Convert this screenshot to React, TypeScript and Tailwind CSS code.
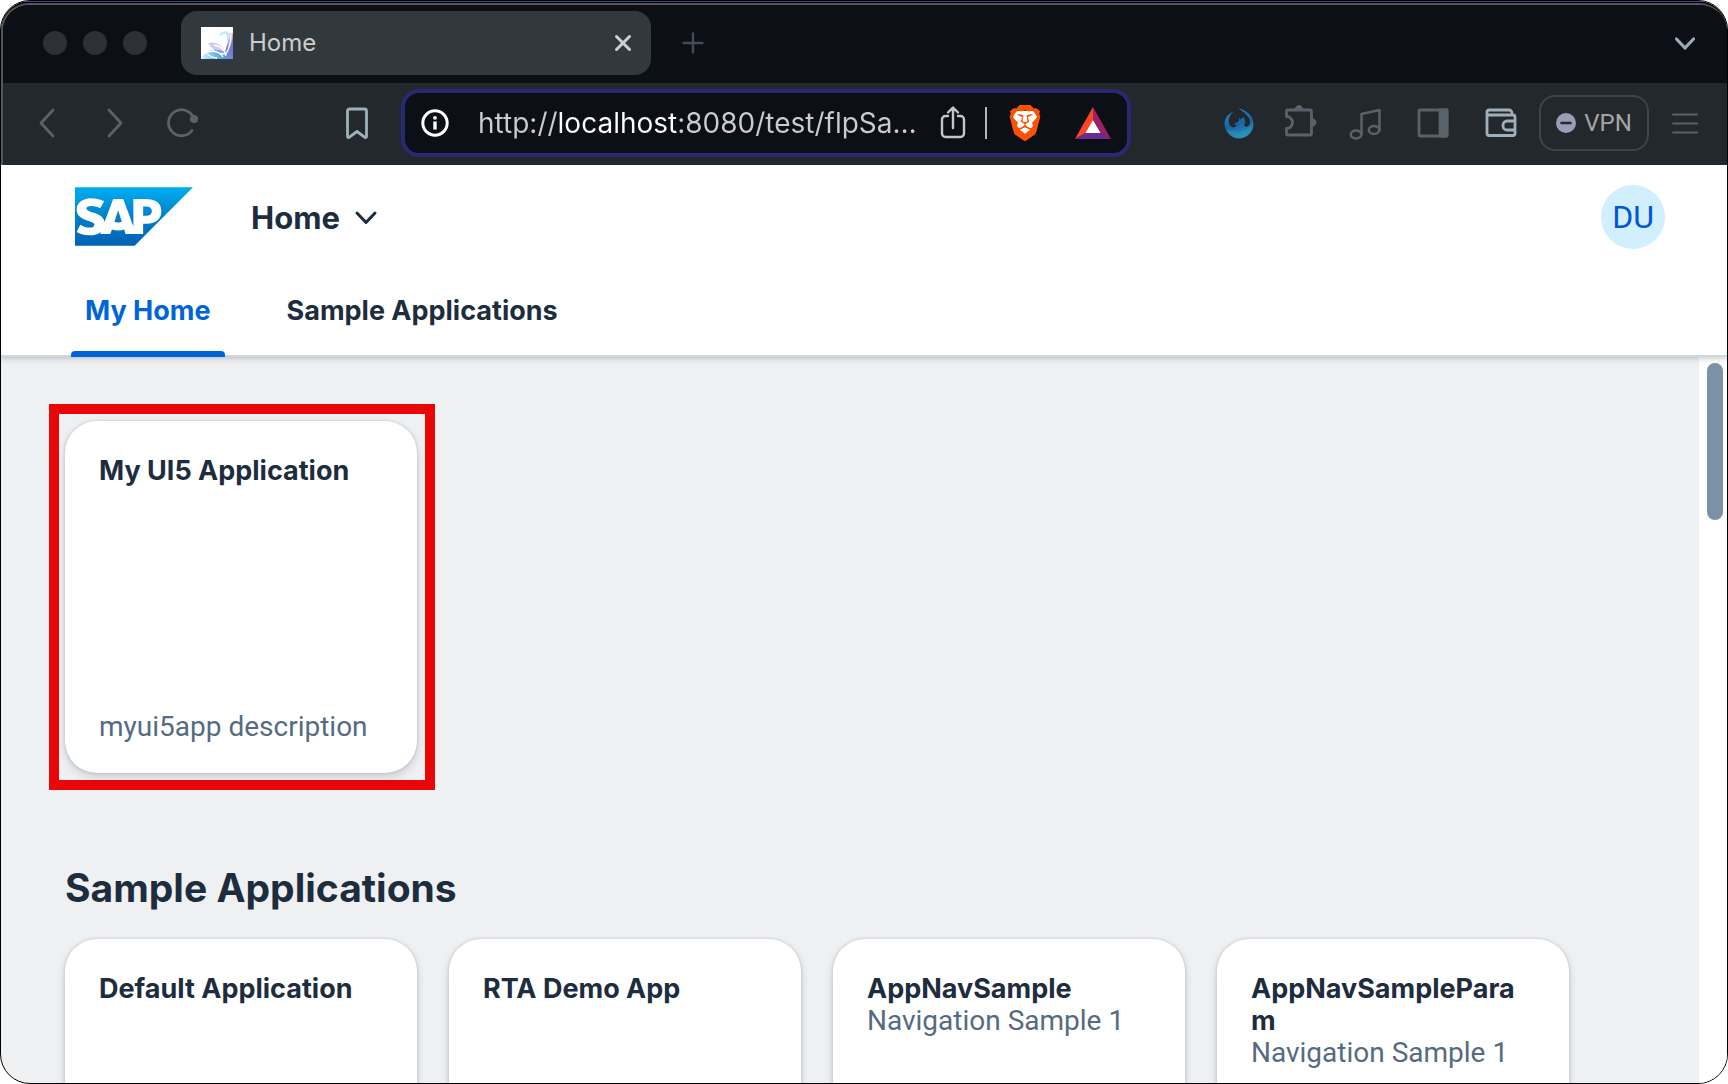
import type { ReactNode } from "react";
import { SiBrave, SiSap } from "react-icons/si";

type Tile = { title: string; subtitle?: string; footer?: string };

const sampleTiles: Tile[] = [
  { title: "Default Application" },
  { title: "RTA Demo App" },
  { title: "AppNavSample", subtitle: "Navigation Sample 1" },
  { title: "AppNavSampleParam", subtitle: "Navigation Sample 1" },
];

function ToolButton({ label, className = "", children }: { label: string; className?: string; children: ReactNode }) {
  return (
    <button type="button" aria-label={label} className={`size-10 shrink-0 ${className}`}>
      <svg viewBox="0 0 40 40" className="size-10" fill="none" stroke="currentColor" strokeWidth="2.8" strokeLinecap="round" strokeLinejoin="round">
        {children}
      </svg>
    </button>
  );
}

function Favicon() {
  return (
    <svg viewBox="0 0 32 32" className="size-8 shrink-0" aria-hidden="true">
      <defs>
        <linearGradient id="favBlue" x1="0" y1="1" x2="1" y2="0.6">
          <stop offset="0" stopColor="#d8f3fb" />
          <stop offset="0.5" stopColor="#4aa9e4" />
          <stop offset="1" stopColor="#6a63c9" />
        </linearGradient>
        <linearGradient id="favPink" x1="0" y1="1" x2="1" y2="0">
          <stop offset="0" stopColor="#8f9fe6" />
          <stop offset="1" stopColor="#f4d5ec" />
        </linearGradient>
      </defs>
      <rect width="32" height="32" fill="#fff" />
      <path d="M0 32C5 22 16 21 24 25C26 18 28 10 32 6V32Z" fill="url(#favBlue)" opacity="0.9" />
      <path d="M7 16C15 14 22 18 25 26C18 27 12 24 7 16Z" fill="#a9a3df" opacity="0.55" />
      <path d="M22 5C28 4 26 14 27 24C30 18 32 13 32 5L28 6Z" fill="url(#favPink)" opacity="0.7" />
      <path d="M19 8C24 3 28 5 27 12" fill="none" stroke="#bfe6f5" strokeWidth="2" />
      <path d="M6 17C10 24 17 27 25 27M2 28C8 23 18 23 22 30M13 18C20 19 24 23 25 29M30 8C30 16 28 22 25 27M6 27C10 30 13 31 16 31" fill="none" stroke="#fff" strokeWidth="1.3" />
    </svg>
  );
}

function TabStrip() {
  return (
    <div className="flex h-[78px] items-start bg-[#0c0f16] pt-[6px]">
      <div className="flex h-16 items-center gap-4 pl-10">
        <span className="size-6 rounded-full bg-[#2e3035]" />
        <span className="size-6 rounded-full bg-[#2e3035]" />
        <span className="size-6 rounded-full bg-[#2e3035]" />
      </div>
      <div className="ml-[34px] flex h-16 w-[470px] items-center rounded-2xl bg-[#32393e] pr-4 pl-5">
        <Favicon />
        <span className="ml-4 text-[24px] leading-8 text-[#cccccc]">Home</span>
        <button type="button" aria-label="Close tab" className="ml-auto size-6 text-[#d0d0d0]">
          <svg viewBox="0 0 24 24" className="size-6" stroke="currentColor" strokeWidth="3" strokeLinecap="round">
            <path d="M5.500 5.500l13 13M18.500 5.500l-13 13" />
          </svg>
        </button>
      </div>
      <button type="button" aria-label="New tab" className="ml-[30px] flex h-16 items-center text-[#444c53]">
        <svg viewBox="0 0 24 24" className="size-6" stroke="currentColor" strokeWidth="2.4" strokeLinecap="round">
          <path d="M12 2.500v19M2.500 12h19" />
        </svg>
      </button>
      <button type="button" aria-label="Search tabs" className="mr-[30px] ml-auto flex h-16 items-center text-[#9dabb2]">
        <svg viewBox="0 0 24 24" className="size-6" fill="none" stroke="currentColor" strokeWidth="3.200" strokeLinecap="round" strokeLinejoin="round">
          <path d="M3.500 8l8.500 9 8.500-9" />
        </svg>
      </button>
    </div>
  );
}

function AddressBar() {
  return (
    <div className="ml-6 flex h-[68px] min-w-0 flex-1 items-center rounded-[18px] border-4 border-[#2a2773] bg-[#0c0f16] pr-4 pl-4">
      <button type="button" aria-label="View site information" className="size-7 shrink-0">
        <svg viewBox="0 0 28 28" className="size-7" fill="none" stroke="#fff" strokeWidth="3">
          <circle cx="14" cy="14" r="12.200" />
          <path d="M14 12.500v8" strokeWidth="3.400" />
          <circle cx="14" cy="8.800" r="1.900" fill="#fff" stroke="none" />
        </svg>
      </button>
      <input
        type="text"
        aria-label="Address"
        defaultValue="http://localhost:8080/test/flpSa…"
        className="ml-[29px] h-10 w-0 flex-1 bg-[linear-gradient(90deg,#cccccc_79px,#ffffff_79px,#ffffff_199px,#cccccc_199px)] bg-clip-text text-[28px] text-transparent outline-none"
      />
      <button type="button" aria-label="Share" className="h-10 w-8 shrink-0">
        <svg viewBox="0 0 32 40" className="h-10 w-8" fill="none" stroke="#c6c6c6" strokeWidth="2.400" strokeLinecap="round" strokeLinejoin="round">
          <path d="M11 13H8.500A3.500 3.500 0 0 0 5 16.500v14A3.500 3.500 0 0 0 8.500 34h15a3.500 3.500 0 0 0 3.500-3.500v-14a3.500 3.500 0 0 0-3.500-3.500H21M16 25V5M11 9.500L16 4.500l5 5" />
        </svg>
      </button>
      <span className="ml-4 h-8 w-[2px] bg-[#b4b6b8]" />
      <button type="button" aria-label="Brave Shields" className="relative ml-5 h-9 w-9 shrink-0">
        <svg viewBox="0 0 36 36" className="absolute inset-0 size-9" aria-hidden="true">
          <path d="M8 6h20l3 8-4 14-9 6-9-6L5 14Z" fill="#fff" />
        </svg>
        <SiBrave className="absolute inset-0 size-9 text-[#fb5104]" />
      </button>
      <button type="button" aria-label="Brave Rewards" className="ml-8 h-9 w-9 shrink-0">
        <svg viewBox="0 0 36 36" className="size-9">
          <path d="M18 2L0 34L11 28L18 15Z" fill="#ff4724" />
          <path d="M18 2L36 34L25 28L18 15Z" fill="#9e1f63" />
          <path d="M0 34H36L25 27.500H11Z" fill="#662d91" />
          <path d="M18 15L25.500 28H10.500Z" fill="#fff" />
        </svg>
      </button>
    </div>
  );
}

function Toolbar() {
  return (
    <div className="flex h-[82px] items-center bg-[#23282c] pb-[2px] pl-6 text-[#59626a]">
      <div className="flex gap-7">
        <ToolButton label="Back">
          <path d="M26 7L14 20l12 13" />
        </ToolButton>
        <ToolButton label="Forward">
          <path d="M14 7l12 13-12 13" />
        </ToolButton>
        <ToolButton label="Reload">
          <path d="M31 16A13 13 0 1 0 29 27.500" />
          <circle cx="31" cy="16" r="4" fill="currentColor" stroke="none" />
        </ToolButton>
      </div>
      <ToolButton label="Bookmark this page" className="ml-[134px] text-[#9fb0ba]">
        <path d="M12.500 6h15a2 2 0 0 1 2 2v25.500a1 1 0 0 1-1.600.8L20 28.500l-7.900 5.800a1 1 0 0 1-1.600-.8V8a2 2 0 0 1 2-2z" />
      </ToolButton>
      <AddressBar />
      <div className="ml-[86px] flex gap-6">
        <ToolButton label="Extension">
          <defs>
            <linearGradient id="phoenix" x1="0" y1="0" x2="0.3" y2="1">
              <stop offset="0" stopColor="#268fcb" />
              <stop offset="0.6" stopColor="#1b62a4" />
              <stop offset="1" stopColor="#2b8db3" />
            </linearGradient>
          </defs>
          <path
            d="M16 9C10 11.500 7.500 16 7.500 21C8 29.500 15 35.500 22 35.500C30 35.500 36.500 29 36.500 21C36.500 13 31 8.500 21 5C28 10 33.500 14 33 20C32.500 23.500 29 25 27 22.500L28.500 19L26.500 14L24 16.500L22 15V18L16.500 21.500L20 22C18 25 15.500 25 13.500 23C10 18.500 12 13 16 9Z"
            fill="url(#phoenix)"
            stroke="none"
          />
          <path d="M9 26c4 3 8 1 13 4 5-4 9-3 13-8-1 7-6 12-13 12S11 31 9 26z" fill="#2a9fc0" opacity="0.35" stroke="none" />
        </ToolButton>
        <ToolButton label="Extensions">
          <path d="M6.500 7h22.500a1.500 1.500 0 0 1 1.500 1.500v22a1.500 1.500 0 0 1-1.500 1.500h-22.500a1 1 0 0 1-1-1v-5.500a6 6 0 0 0 0-12v-5.500a1 1 0 0 1 1-1z" />
          <path d="M14 7a4 4.500 0 0 1 8 0zM30.500 15.500a4.500 4 0 0 1 0 8z" fill="currentColor" strokeWidth="1" />
        </ToolButton>
        <ToolButton label="Media controls">
          <ellipse cx="11" cy="31.500" rx="5.200" ry="4" strokeWidth="2.500" />
          <ellipse cx="29" cy="27" rx="5.200" ry="4" strokeWidth="2.500" />
          <path d="M16.500 31.500V11L34.500 7v20" strokeWidth="2.500" />
        </ToolButton>
      </div>
      <div className="ml-7 flex gap-7">
        <ToolButton label="Sidebar">
          <rect x="6" y="7" width="28" height="26" rx="1" />
          <path d="M27 7h7v26h-7z" fill="currentColor" />
        </ToolButton>
        <ToolButton label="Wallet" className="text-[#9fb0ba]">
          <path d="M31 11.500V10a3 3 0 0 0-3-3H8a2 2 0 0 0-2 2v21.500a2 2 0 0 0 2 2h24a2 2 0 0 0 2-2V14a2 2 0 0 0-2-2H6.500M34 18h-8a4 4 0 0 0-4 4v1a4 4 0 0 0 4 4h8" />
        </ToolButton>
      </div>
      <button type="button" className="ml-[18px] flex h-14 w-[110px] shrink-0 items-center justify-center gap-2 rounded-2xl border-2 border-[#3b454a] text-[24px] text-[#a5a5a5]">
        <svg viewBox="0 0 20 20" className="size-5" aria-hidden="true">
          <circle cx="10" cy="10" r="10" fill="#9a9db6" />
          <path d="M5.500 10h9" stroke="#23282c" strokeWidth="2.600" strokeLinecap="round" />
        </svg>
        <span className="font-['Roboto',sans-serif]">VPN</span>
      </button>
      <ToolButton label="Menu" className="mr-[22px] ml-4">
        <path d="M8 11.500h24M8 20.500h24M8 29.500h24" strokeWidth="2" />
      </ToolButton>
    </div>
  );
}

function ShellHeader() {
  return (
    <header className="relative z-10 border-b-2 border-[#d4d5d9] bg-white text-[#1d2d3e] shadow-[0_1px_6px_rgba(34,53,72,0.3)]">
      <div className="flex h-[104px] items-center pr-[62px] pl-[74px]">
        <svg className="absolute size-0" aria-hidden="true">
          <linearGradient id="sapBlue" x1="0" y1="0" x2="0" y2="1">
            <stop offset="0" stopColor="#00aeef" />
            <stop offset="0.5" stopColor="#0080cb" />
            <stop offset="1" stopColor="#0062b3" />
          </linearGradient>
        </svg>
        <a href="#home" aria-label="SAP" className="pb-[2px]">
          <SiSap viewBox="0 6.064 24 11.872" fill="url(#sapBlue)" className="h-[59px] w-[118px]" />
        </a>
        <button type="button" className="ml-[58px] flex items-center pt-[2px] text-[31px] font-bold">
          Home
          <svg viewBox="0 0 24 24" className="ml-[14px] size-6" fill="none" stroke="currentColor" strokeWidth="3" strokeLinecap="round" strokeLinejoin="round">
            <path d="M3 7l9 9.500L21 7" />
          </svg>
        </button>
        <button type="button" aria-label="Profile" className="ml-auto size-16 rounded-full bg-[#d1efff] font-['Roboto',sans-serif] text-[32px] text-[#0057d2]">
          DU
        </button>
      </div>
      <nav className="flex gap-12 pl-[70px] text-[27px] leading-8 font-bold">
        <a href="#my-home" aria-current="page" className="relative h-[86px] px-[14px] pt-[26px] text-[#0064d9]">
          My Home
          <span className="absolute inset-x-0 -bottom-[2px] h-[6px] rounded-t bg-[#0064d9]" />
        </a>
        <a href="#sample-applications" className="h-[86px] px-[14px] pt-[26px]">
          Sample Applications
        </a>
      </nav>
    </header>
  );
}

function TileCard({ title, subtitle, footer }: Tile) {
  return (
    <a
      href="#app"
      className="flex h-[352px] w-[352px] shrink-0 flex-col rounded-[32px] bg-white pt-[34px] pr-9 pb-[30px] pl-[34px] leading-8 shadow-[0_0_3px_rgba(34,53,72,0.22),0_4px_8px_rgba(34,53,72,0.18)]"
    >
      <h3 className="text-[27px] font-bold break-words">{title}</h3>
      {subtitle && <p className="font-['Roboto',sans-serif] text-[28px] text-[#556b82]">{subtitle}</p>}
      {footer && <p className="mt-auto font-['Roboto',sans-serif] text-[28px] text-[#556b82]">{footer}</p>}
    </a>
  );
}

export default function App() {
  return (
    <div className="h-screen bg-white font-['Inter',sans-serif]">
      <div className="flex h-full flex-col overflow-hidden rounded-[30px] border border-black bg-[#eff0f2]">
        <div className="shrink-0 border-t border-[#35507a] bg-black pt-px">
          <div className="overflow-hidden rounded-tl-[28px] rounded-tr-[28px] border-t-2 border-l-2 border-[#55575a]">
            <TabStrip />
            <Toolbar />
          </div>
        </div>
        <ShellHeader />
        <div className="flex min-h-0 flex-1">
          <main className="min-w-0 flex-1 overflow-hidden pt-[47px] pl-12 text-[#1d2d3e]">
            <div className="w-fit border-[10px] border-[#e90606] py-[7px] pr-2 pl-[6px]">
              <TileCard title="My UI5 Application" footer="myui5app description" />
            </div>
            <section className="pt-[74px] pl-4">
              <h2 className="text-[39px] leading-[48px] font-bold">Sample Applications</h2>
              <div className="mt-[27px] flex gap-8">
                {sampleTiles.map((tile) => (
                  <TileCard key={tile.title} {...tile} />
                ))}
              </div>
            </section>
          </main>
          <div className="w-7 shrink-0 bg-white pt-[6px] pl-2">
            <div className="h-[157px] w-4 rounded-full bg-[#7b91a8]" />
          </div>
        </div>
      </div>
    </div>
  );
}
